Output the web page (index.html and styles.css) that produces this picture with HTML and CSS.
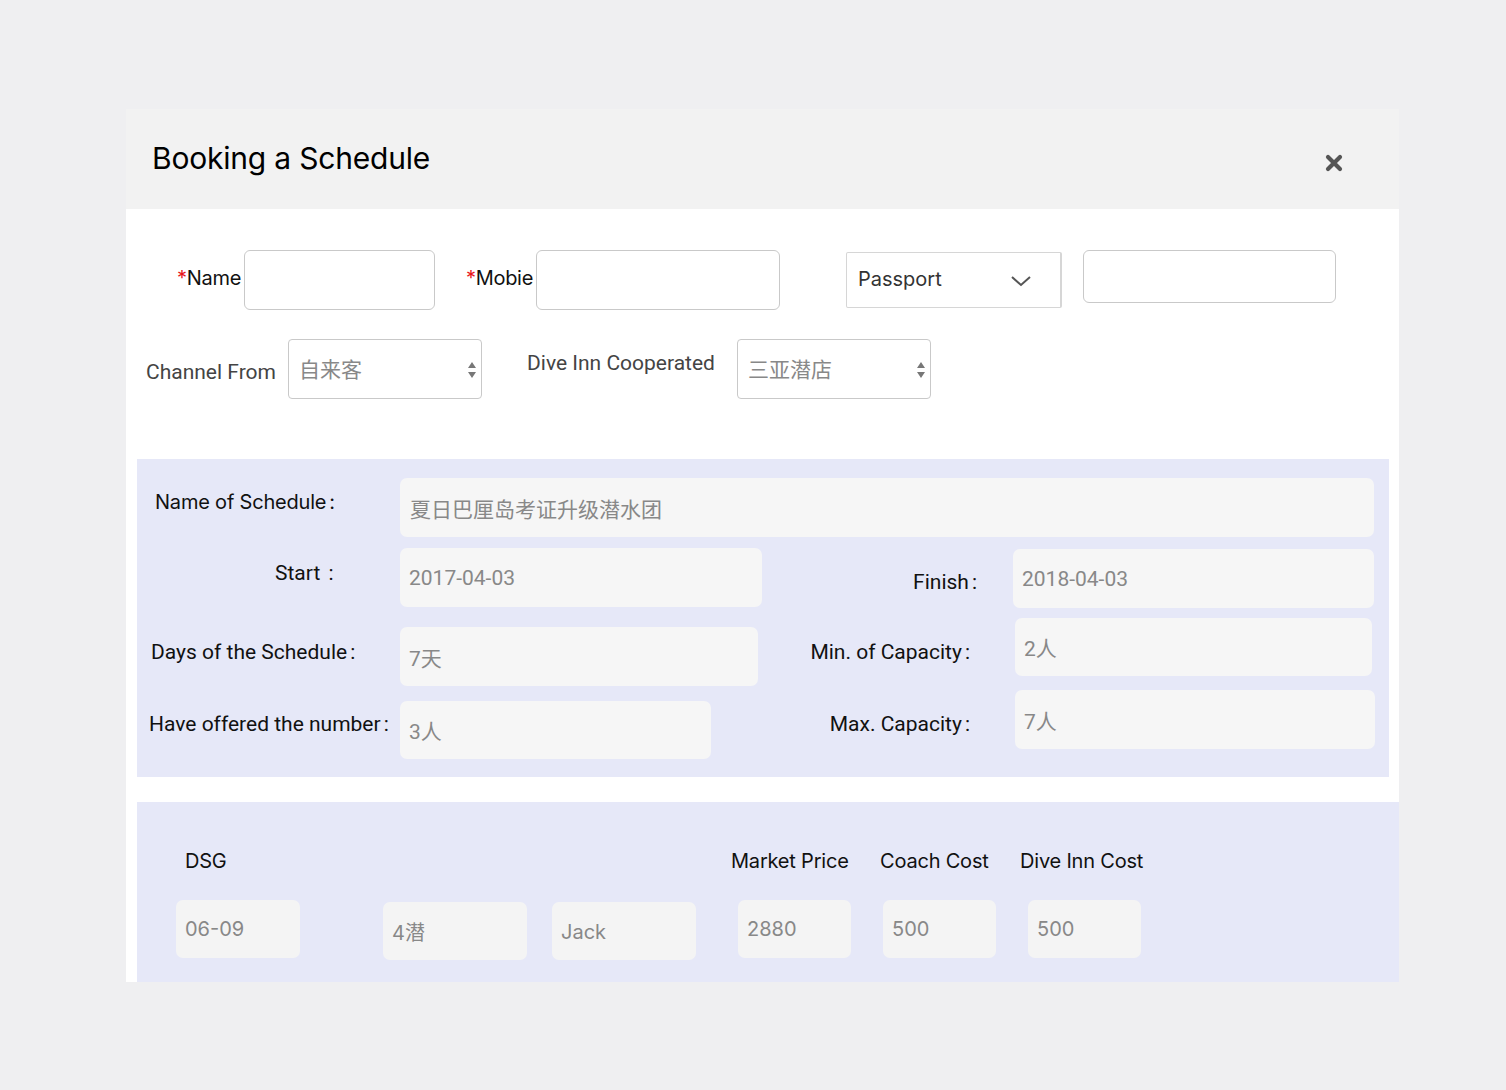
FILE: index.html
```html
<!DOCTYPE html>
<html lang="en">
<head>
<meta charset="utf-8">
<title>Booking a Schedule</title>
<link rel="stylesheet" href="styles.css">
</head>
<body>
<div class="modal">
  <div class="modal-header">
    <h1 class="modal-title">Booking a Schedule</h1>
    <span class="close" aria-label="close">
      <svg width="18" height="18" viewBox="0 0 18 18"><path d="M3 3 L15 15 M15 3 L3 15" stroke="#555" stroke-width="4.2" stroke-linecap="round"/></svg>
    </span>
  </div>

  <div class="form-top">
    <div class="row row-1">
      <label class="lbl lbl-name"><span class="req">*</span>Name</label>
      <div class="box box-name"></div>
      <label class="lbl lbl-mobile"><span class="req">*</span>Mobie</label>
      <div class="box box-mobile"></div>
      <div class="id-select">
        <span>Passport</span>
        <svg width="22" height="14" viewBox="0 0 22 14"><path d="M2 3 L11 11 L20 3" fill="none" stroke="#555" stroke-width="2"/></svg>
      </div>
      <div class="box box-id"></div>
    </div>
    <div class="row row-2">
      <label class="lbl2 lbl-channel">Channel From</label>
      <div class="select select-channel">
        <span>自来客</span>
        <svg class="updown" width="10" height="18" viewBox="0 0 10 18"><path d="M5 1 L9 7 L1 7 Z M1 11 L9 11 L5 17 Z" fill="#777"/></svg>
      </div>
      <label class="lbl2 lbl-inn">Dive Inn Cooperated</label>
      <div class="select select-inn">
        <span>三亚潜店</span>
        <svg class="updown" width="10" height="18" viewBox="0 0 10 18"><path d="M5 1 L9 7 L1 7 Z M1 11 L9 11 L5 17 Z" fill="#777"/></svg>
      </div>
    </div>
  </div>

  <div class="panel">
    <div class="prow prow-a">
      <label class="plbl plbl-schedule">Name of Schedule<span class="colon">:</span></label>
      <div class="field field-schedule">夏日巴厘岛考证升级潜水团</div>
    </div>
    <div class="prow prow-b">
      <label class="plbl plbl-start">Start <span class="colon">:</span></label>
      <div class="field field-start">2017-04-03</div>
      <label class="plbl-r plbl-finish">Finish<span class="colon">:</span></label>
      <div class="field field-finish">2018-04-03</div>
    </div>
    <div class="prow prow-c">
      <label class="plbl plbl-days">Days of the Schedule<span class="colon">:</span></label>
      <div class="field field-days">7天</div>
      <label class="plbl-r plbl-min">Min. of Capacity<span class="colon">:</span></label>
      <div class="field field-min">2人</div>
    </div>
    <div class="prow prow-d">
      <label class="plbl plbl-have">Have offered the number<span class="colon">:</span></label>
      <div class="field field-have">3人</div>
      <label class="plbl-r plbl-max">Max. Capacity<span class="colon">:</span></label>
      <div class="field field-max">7人</div>
    </div>
  </div>

  <div class="costs">
    <div class="cost-head">
      <span class="ch ch-dsg">DSG</span>
      <span class="ch ch-market">Market Price</span>
      <span class="ch ch-coach">Coach Cost</span>
      <span class="ch ch-inn">Dive Inn Cost</span>
    </div>
    <div class="cost-row">
      <div class="cfield cf-date">06-09</div>
      <div class="cfield cf-type">4潜</div>
      <div class="cfield cf-coach">Jack</div>
      <div class="cfield cf-market">2880</div>
      <div class="cfield cf-ccost">500</div>
      <div class="cfield cf-icost">500</div>
    </div>
  </div>
</div>
</body>
</html>
```

FILE: styles.css
```css
* { box-sizing: border-box; }

body {
  margin: 0;
  background: #efeff1;
  font-family: Inter, "Noto Sans CJK SC", sans-serif;
  color: #111;
}

.modal {
  margin: 109px 0 0 126px;
  width: 1273px;
  height: 873px;
  background: #fff;
}

.modal-header {
  height: 100px;
  background: #f2f2f2;
  display: flex;
  align-items: center;
  justify-content: space-between;
  padding: 0 56px 0 26px;
}

.modal-title {
  margin: 0;
  font-weight: 400;
  font-size: 30px;
  color: #000;
  letter-spacing: -0.2px;
  position: relative;
  top: -1px;
}

.close {
  display: flex;
  margin-top: 7px;
}

/* top form */
.form-top {
  padding-top: 41px;
}

.row {
  display: flex;
}

.row-1 {
  height: 59px;
  padding-left: 34px;
  align-items: flex-start;
}

.lbl {
  font-family: Inter, sans-serif;
  font-size: 20px;
  color: #111;
  text-align: right;
  height: 59px;
  line-height: 57px;
  letter-spacing: -0.3px;
}
.req { color: #e8141b; }

.lbl-name { width: 81px; margin-right: 3px; }
.lbl-mobile { width: 98px; margin-right: 3px; }

.box {
  border: 1px solid #c9c9c9;
  border-radius: 6px;
  background: #fff;
}
.box-name { width: 191px; height: 60px; }
.box-mobile { width: 244px; height: 60px; }
.box-id { width: 253px; height: 53px; margin-left: 21px; }

.id-select {
  margin-left: 66px;
  margin-top: 2px;
  width: 216px;
  height: 56px;
  border: 1px solid #d6d6d6;
  border-right-width: 2px;
  border-radius: 2px;
  display: flex;
  align-items: center;
  justify-content: space-between;
  padding: 0 28px 0 11px;
  font-family: Inter, sans-serif;
  font-size: 20px;
  color: #333;
}
.id-select span { margin-top: -2px; }
.id-select svg { margin-top: 2px; }

.row-2 {
  margin-top: 30px;
  padding-left: 20px;
  height: 60px;
  align-items: flex-start;
}

.lbl2 {
  font-family: Roboto, sans-serif;
  font-size: 21px;
  color: #444;
  line-height: 24px;
}
.lbl-channel { width: 142px; margin-top: 21px; }
.lbl-inn { width: 210px; margin-left: 45px; margin-top: 12px; }

.select {
  width: 194px;
  height: 60px;
  border: 1px solid #c9c9c9;
  border-radius: 4px;
  display: flex;
  align-items: center;
  justify-content: space-between;
  padding: 0 4px 0 10px;
  font-family: "Noto Sans CJK SC", sans-serif;
  font-size: 21px;
  color: #888;
}
.select span { margin-top: -2px; }
.updown { margin-top: 2px; }

/* schedule panel */
.panel {
  margin: 60px 0 0 11px;
  width: 1252px;
  height: 318px;
  background: #e6e8f8;
  padding-top: 19px;
}

.prow {
  display: flex;
  align-items: flex-start;
}

.plbl, .plbl-r {
  font-family: Roboto, sans-serif;
  font-size: 21px;
  line-height: 24px;
  color: #111;
  white-space: nowrap;
}
.plbl { width: 263px; }
.plbl-r { text-align: right; }
.colon { margin-left: 3px; }

.plbl-schedule { padding-left: 18px; margin-top: 12px; font-family: Inter, sans-serif; font-size: 20px; letter-spacing: -0.2px; }
.plbl-start { padding-left: 138px; margin-top: 13px; }
.plbl-days { padding-left: 14px; margin-top: 22px; }
.plbl-have { padding-left: 12px; margin-top: 22px; }

.plbl-finish { width: 251px; padding-right: 36px; margin-top: 22px; }
.plbl-min { width: 257px; padding-right: 45px; margin-top: 22px; }
.plbl-max { width: 304px; padding-right: 45px; margin-top: 22px; }

.field {
  background: #f6f6f6;
  border-radius: 7px;
  height: 59px;
  display: flex;
  align-items: center;
  padding-left: 9px;
  font-family: Roboto, "Noto Sans CJK SC", sans-serif;
  font-size: 21px;
  color: #888;
}

.field-schedule { width: 974px; padding-left: 10px; font-family: "Noto Sans CJK SC", sans-serif; font-size: 21px; }

.prow-b { margin-top: 11px; }
.field-start { width: 362px; }
.field-finish { width: 361px; margin-top: 1px; }

.prow-c { margin-top: 10px; }
.field-days { width: 358px; margin-top: 9px; }
.field-min { width: 357px; height: 58px; }

.prow-d { margin-top: 4px; }
.field-have { width: 311px; height: 58px; margin-top: 11px; }
.field-max { width: 360px; }

/* costs */
.costs {
  margin: 25px 0 0 11px;
  width: 1262px;
  height: 180px;
  background: #e6e8f8;
  padding-top: 47px;
}

.cost-head {
  display: flex;
  padding-left: 48px;
  font-size: 20px;
  line-height: 24px;
  color: #111;
  letter-spacing: -0.2px;
}
.ch-dsg { width: 546px; }
.ch-market { width: 149px; }
.ch-coach { width: 140px; }

.cost-row {
  display: flex;
  align-items: flex-start;
  padding-left: 39px;
  margin-top: 27px;
}

.cfield {
  height: 58px;
  border-radius: 7px;
  background: #f4f4f4;
  display: flex;
  align-items: center;
  padding-left: 9px;
  font-family: Inter, "Noto Sans CJK SC", sans-serif;
  font-size: 20px;
  color: #888;
}
.cf-date { width: 124px; }
.cf-type { width: 144px; margin-left: 83px; margin-top: 2px; padding-top: 1px; }
.cf-coach { width: 144px; margin-left: 25px; margin-top: 2px; padding-top: 1px; }
.cf-market { width: 113px; margin-left: 42px; }
.cf-ccost { width: 113px; margin-left: 32px; }
.cf-icost { width: 113px; margin-left: 32px; }
```
